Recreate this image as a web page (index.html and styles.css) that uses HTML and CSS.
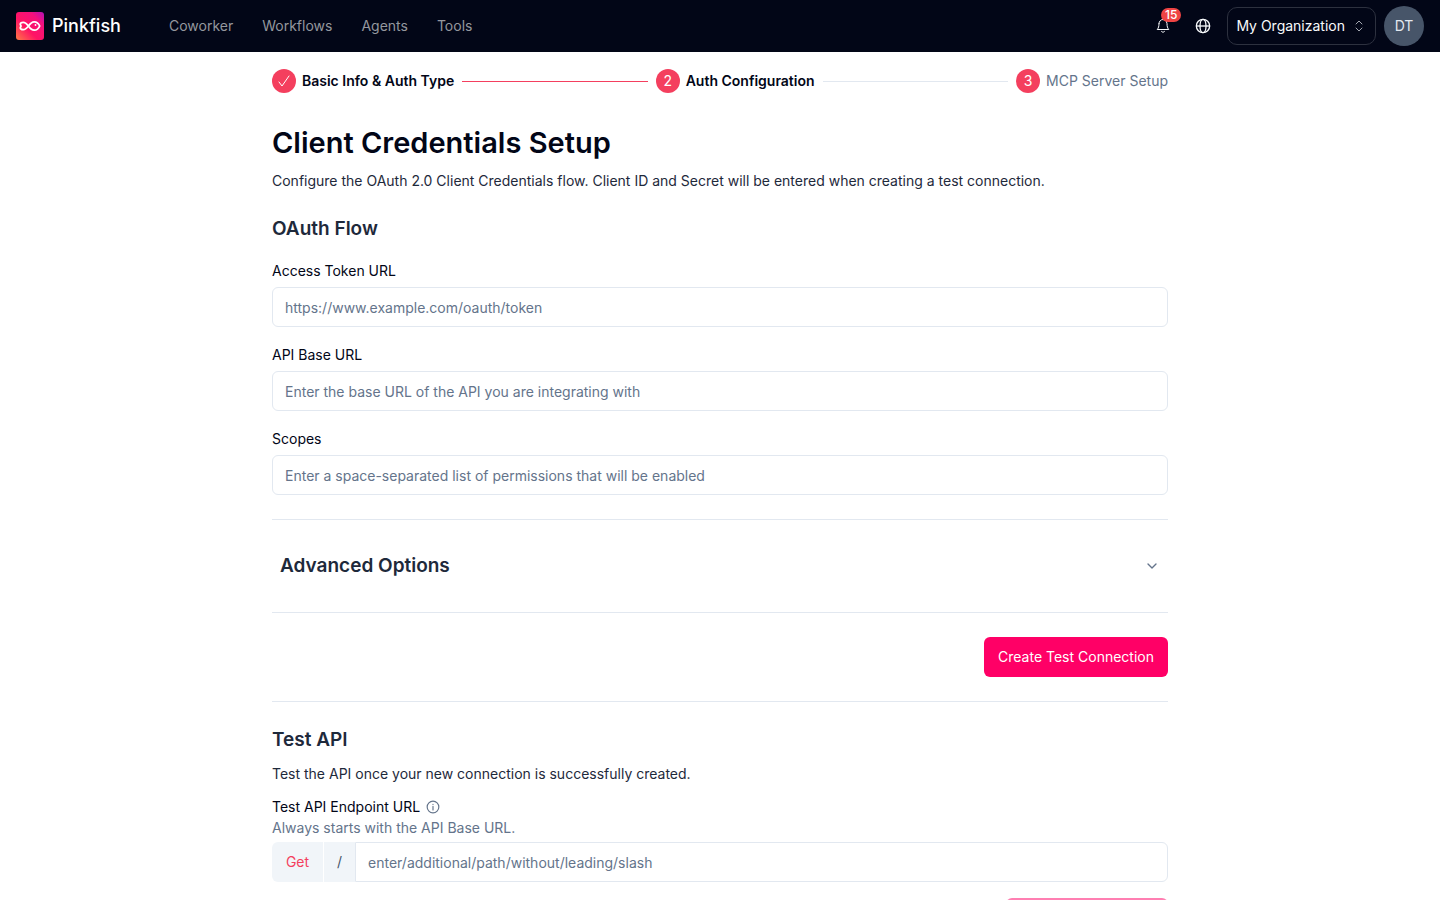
FILE: index.html
```html
<!DOCTYPE html>
<html lang="en">
<head>
    <meta charset="UTF-8">
    <meta name="viewport" content="width=device-width, initial-scale=1.0">
    <title>Client Credentials Setup - Pinkfish</title>
    <link rel="stylesheet" href="styles.css">
</head>
<body>

    <header class="topbar">
        <a class="brand" href="#">
            <svg width="28" height="28" viewBox="0 0 28 28" aria-hidden="true">
                <defs>
                    <linearGradient id="logo-bg" x1="0" y1="1" x2="1" y2="0">
                        <stop offset="0" stop-color="#ff7a45"/>
                        <stop offset="0.4" stop-color="#ff1464"/>
                        <stop offset="0.75" stop-color="#f5107c"/>
                        <stop offset="1" stop-color="#b012b8"/>
                    </linearGradient>
                </defs>
                <rect width="28" height="28" rx="3" fill="url(#logo-bg)"/>
                <path d="M12.500 14C10.500 11.500 9.200 10.300 7.300 10.300C5.200 10.300 4.300 11.300 4.300 12.200C4.300 13 5 13.300 5 14C5 14.700 4.300 15 4.300 15.800C4.300 16.700 5.200 17.700 7.300 17.700C9.200 17.700 10.500 16.500 12.500 14C14.300 11.300 16 9.800 18.200 9.800C20.800 9.800 22.700 11.500 23.700 14C22.700 16.500 20.800 18.200 18.200 18.200C16 18.200 14.300 16.700 12.500 14Z" fill="none" stroke="#fff" stroke-width="1.800" stroke-linejoin="round"/>
                <circle cx="19.500" cy="13" r="0.900" fill="#fff"/>
            </svg>
            <span>Pinkfish</span>
        </a>
        <nav class="nav">
            <a href="#">Coworker</a>
            <a href="#">Workflows</a>
            <a href="#">Agents</a>
            <a href="#">Tools</a>
        </nav>
        <div class="actions">
            <button class="icon-btn" type="button" aria-label="Notifications">
                <svg width="16" height="16" viewBox="0 0 16 16" fill="none" stroke="currentColor" stroke-linecap="round" stroke-linejoin="round"><path d="M4 5.500a4 4 0 0 1 8 0c0 3 .500 4.500 1.800 6H2.200C3.500 10 4 8.500 4 5.500"/><path d="M6.500 13.500c.800 1 2.200 1 3 0"/></svg>
                <span class="badge">15</span>
            </button>
            <button class="icon-btn" type="button" aria-label="Language">
                <svg width="16" height="16" viewBox="0 0 24 24" fill="none" stroke="currentColor" stroke-width="2"><circle cx="12" cy="12" r="10"/><ellipse cx="12" cy="12" rx="4.500" ry="10"/><path d="M2 12h20"/></svg>
            </button>
            <button class="org" type="button">
                <span>My Organization</span>
                <svg width="12" height="12" viewBox="0 0 12 12" fill="none" stroke="currentColor" stroke-linecap="round" stroke-linejoin="round"><path d="M3 4l3-3 3 3M3 8l3 3 3-3"/></svg>
            </button>
            <button class="avatar" type="button">DT</button>
        </div>
    </header>

    <main class="content">

        <ol class="steps">
            <li class="step done">
                <span class="dot"><svg width="14" height="14" viewBox="0 0 14 14" fill="none" stroke="currentColor" stroke-linecap="round" stroke-linejoin="round"><path d="M2 8l3 4 7-10"/></svg></span>
                <span>Basic Info &amp; Auth Type</span>
            </li>
            <li class="step current"><span class="dot">2</span><span>Auth Configuration</span></li>
            <li class="step"><span class="dot">3</span><span>MCP Server Setup</span></li>
        </ol>

        <h1>Client Credentials Setup</h1>
        <p>Configure the OAuth 2.0 Client Credentials flow. Client ID and Secret will be entered when creating a test connection.</p>

        <section class="fields">
            <h2>OAuth Flow</h2>
            <div class="field">
                <label for="token-url">Access Token URL</label>
                <input id="token-url" type="url" placeholder="https://www.example.com/oauth/token">
            </div>
            <div class="field">
                <label for="base-url">API Base URL</label>
                <input id="base-url" type="url" placeholder="Enter the base URL of the API you are integrating with">
            </div>
            <div class="field">
                <label for="scopes">Scopes</label>
                <input id="scopes" type="text" placeholder="Enter a space-separated list of permissions that will be enabled">
            </div>
        </section>

        <section class="row">
            <button class="accordion" type="button" aria-expanded="false">
                <span>Advanced Options</span>
                <svg width="16" height="16" viewBox="0 0 24 24" fill="none" stroke="currentColor" stroke-width="2" stroke-linecap="round" stroke-linejoin="round"><path d="M6 9l6 6 6-6"/></svg>
            </button>
        </section>

        <section class="row buttons">
            <button class="primary" type="button">Create Test Connection</button>
        </section>

        <section class="row test">
            <h2>Test API</h2>
            <p>Test the API once your new connection is successfully created.</p>
            <div class="label-line">
                <label for="endpoint">Test API Endpoint URL</label>
                <svg width="14" height="14" viewBox="0 0 24 24" fill="none" stroke="currentColor" stroke-width="2" stroke-linecap="round"><circle cx="12" cy="12" r="10"/><path d="M12 11v6M12 7.500v.1"/></svg>
            </div>
            <p class="hint">Always starts with the API Base URL.</p>
            <div class="endpoint">
                <button class="method" type="button">Get</button>
                <span class="slash">/</span>
                <input id="endpoint" type="text" placeholder="enter/additional/path/without/leading/slash">
            </div>
            <div class="buttons">
                <button class="primary wide" type="button" aria-label="Test API Endpoint" disabled></button>
            </div>
        </section>

    </main>

</body>
</html>
```
FILE: styles.css
```css
* { box-sizing: border-box; margin: 0; padding: 0; }
body {
    height: 100vh;
    overflow: hidden auto;
    scrollbar-width: none;
    font-family: Inter, "Liberation Sans", sans-serif;
    font-size: 14px;
    line-height: 20px;
    color: #1e293b;
    background: #fff;
}
button, input {
    font: inherit;
    color: inherit;
}
button {
    border: none;
    background: none;
    cursor: pointer;
}
a { text-decoration: none; }
svg { flex-shrink: 0; display: block; }

/* top bar */
.topbar {
    display: flex;
    align-items: center;
    height: 52px;
    padding: 0 16px;
    background: #020617;
    color: #f8fafc;
}
.brand {
    display: flex;
    align-items: center;
    gap: 8px;
    color: #fff;
    font-size: 18px;
    font-weight: 500;
}
.nav {
    display: flex;
    gap: 29px;
    margin-left: 48px;
}
.nav a { color: #94979e; }
.actions {
    display: flex;
    align-items: center;
    gap: 8px;
    margin-left: auto;
}
.icon-btn {
    position: relative;
    display: flex;
    align-items: center;
    justify-content: center;
    width: 32px;
    height: 32px;
}
.badge {
    position: absolute;
    top: -2px;
    right: -2px;
    padding: 0 4px;
    border-radius: 8px;
    background: #ef4444;
    color: #fff;
    font-size: 12px;
    font-weight: 500;
    line-height: 14px;
}
.org {
    display: flex;
    align-items: center;
    gap: 8px;
    height: 38px;
    padding: 0 10px 0 8px;
    border: 1px solid #2d313f;
    border-radius: 10px;
}
.org svg { color: #a3a7b0; }
.avatar {
    width: 40px;
    height: 40px;
    border-radius: 50%;
    background: #475569;
    color: #e2e8f0;
}

.content {
    max-width: 928px;
    margin: 0 auto;
    padding: 16px 16px 32px;
}

/* stepper */
.steps {
    display: flex;
    gap: 8px;
    margin-bottom: 29px;
    list-style: none;
}
.step {
    display: flex;
    align-items: center;
    gap: 6px;
    height: 26px;
    color: #64748b;
    white-space: nowrap;
}
.step:not(:last-child) {
    flex: 1 1 auto;
}
.step:not(:last-child)::after {
    content: "";
    flex: 1;
    height: 1px;
    margin-left: 2px;
    background: #e2e8f0;
}
.step.done:not(:last-child)::after { background: #f43f5e; }
.step.done, .step.current {
    color: #020617;
    font-weight: 600;
}
.dot {
    display: flex;
    align-items: center;
    justify-content: center;
    width: 24px;
    height: 24px;
    border-radius: 50%;
    background: #f43f5e;
    color: #fff;
    font-weight: 400;
}

h1 {
    margin-bottom: 8px;
    font-size: 29px;
    font-weight: 600;
    line-height: 40px;
    color: #020617;
}
h2 {
    font-size: 19px;
    font-weight: 600;
    line-height: 28px;
}

/* form */
.fields {
    display: flex;
    flex-direction: column;
    gap: 18px;
    margin: 24px 0;
}
.field {
    display: flex;
    flex-direction: column;
    gap: 6px;
}
label { color: #020617; }
input {
    width: 100%;
    height: 40px;
    padding: 0 12px;
    border: 1px solid #e2e8f0;
    border-radius: 6px;
    background: #fff;
}
input::placeholder { color: #64748b; }
.row {
    padding: 24px 0;
    border-top: 1px solid #e2e8f0;
}
.accordion {
    display: flex;
    align-items: center;
    justify-content: space-between;
    width: 100%;
    height: 44px;
    padding: 0 8px;
    font-size: 19px;
    font-weight: 600;
}
.accordion svg { color: #64748b; }
.buttons {
    display: flex;
    justify-content: flex-end;
}
.primary {
    height: 40px;
    padding: 0 14px;
    border-radius: 6px;
    background: #ff0066;
    color: #fff;
}
.primary.wide { min-width: 162px; }
.primary:disabled {
    opacity: 0.5;
    cursor: default;
}
.test h2 { margin-bottom: 10px; }
.label-line {
    display: flex;
    align-items: center;
    gap: 6px;
    margin: 13px 0 1px;
    color: #64748b;
}
.hint { color: #64748b; }
.endpoint {
    display: flex;
    margin: 4px 0 16px;
}
.method, .slash {
    display: flex;
    align-items: center;
    justify-content: center;
    background: #f1f5f9;
}
.method {
    width: 52px;
    border-right: 1px solid #fff;
    border-radius: 6px 0 0 6px;
    color: #f43f5e;
}
.slash {
    width: 31px;
    color: #475569;
}
.endpoint input {
    flex: 1;
    border-radius: 0 6px 6px 0;
}
```
